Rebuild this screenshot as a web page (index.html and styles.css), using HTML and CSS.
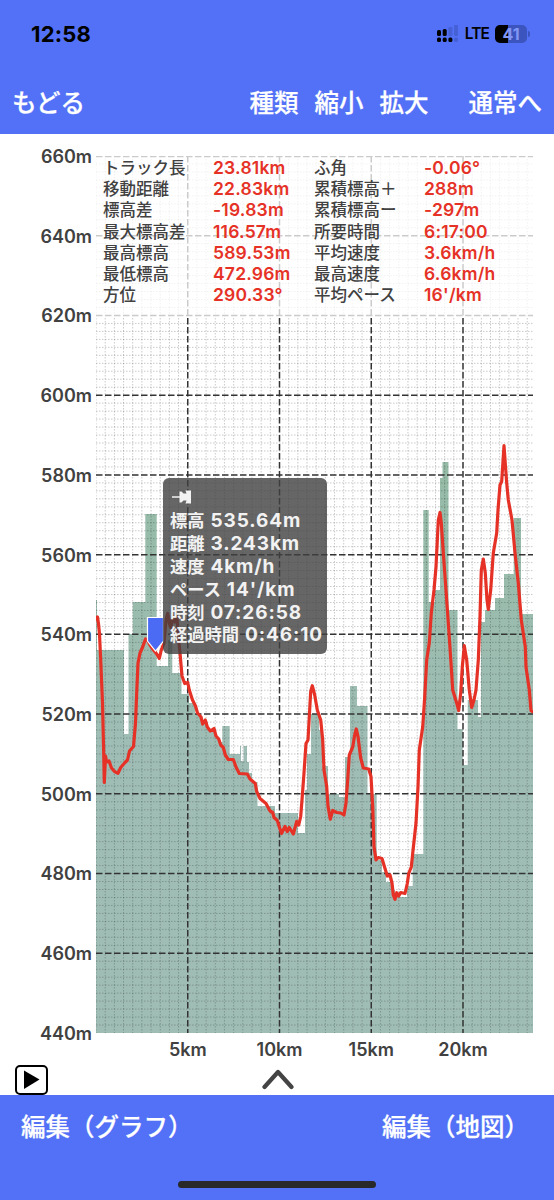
FILE: index.html
```
<!DOCTYPE html>
<html lang="ja">
<head>
    <meta charset="UTF-8">
    <meta name="viewport" content="width=device-width, initial-scale=1.0">
    <title>標高グラフ</title>
    <link rel="stylesheet" href="styles.css">
</head>
<body>
    <div class="app">
        <header class="header">
            <div class="status">
                <span class="clock">12:58</span>
                <div class="status-right">
                    <svg class="signal" width="22" height="18" viewBox="0 0 22 18">
                        <g fill="#000">
                            <rect x="0" y="5" width="4" height="6" rx="1.5"/>
                            <rect x="5.7" y="4" width="4" height="7" rx="1.5"/>
                            <rect x="0" y="12.5" width="4" height="4.5" rx="1.5"/>
                            <rect x="5.7" y="12.5" width="4" height="4.5" rx="1.5"/>
                            <rect x="11.4" y="12.5" width="4" height="4.5" rx="1.5"/>
                        </g>
                        <g fill="#4660d6">
                            <rect x="11.4" y="2" width="4" height="9" rx="1.2"/>
                            <rect x="17" y="0" width="4" height="11" rx="1.2"/>
                            <rect x="17" y="12.5" width="4" height="4.5" rx="1.5"/>
                        </g>
                    </svg>
                    <span class="lte">LTE</span>
                    <span class="battery">41</span>
                    <span class="battery-tip"></span>
                </div>
            </div>
            <nav class="nav">
                <a class="back">もどる</a>
                <a>種類</a>
                <a>縮小</a>
                <a>拡大</a>
                <a class="mode">通常へ</a>
            </nav>
        </header>

        <main class="chart">
            <div class="y-axis">
                <span>660m</span><span>640m</span><span>620m</span><span>600m</span>
                <span>580m</span><span>560m</span><span>540m</span><span>520m</span>
                <span>500m</span><span>480m</span><span>460m</span><span>440m</span>
            </div>
            <div class="plot">
                <svg class="graph" width="437" height="877" viewBox="96 156 437 877">
                    <defs>
                        <linearGradient id="areaFill" gradientUnits="userSpaceOnUse" x1="0" y1="460" x2="0" y2="760">
                            <stop offset="0" stop-color="#95bba6"/>
                            <stop offset="1" stop-color="#9fbdb5"/>
                        </linearGradient>
                    </defs>
                    <path fill="url(#areaFill)" d="M96 1033V600H97V650H124V734H128.500V634H132.700V602H145.300V514H156.700V666H168V640H172.300V673H181.500V694H189V703H195V714H201V722H208V730H216V738H219V742H222.300V726H229.700V754H240V746H241V761H243.500V746H247V762H249V773H252V782H257.500V806H275V813H298V833H305V790H307V754H311V714H319V730H322V766H328V794H339V797H345V757H350V686H357V706H367.500V794H376.700V860H382V872H386V882H391V890H395V897H407V886H412.700V854H423.300V510H428.700V602H435V590H440V478H442.500V462H448.500V610H457.500V729H462.700V765H467.700V700H478V717H481V622H485V610H495V598H504V574H513.700V518H521V614H533V1033Z"/>
                    <g id="grid"></g>
                    <polyline class="track" points="96,619 97.5,617 98.5,624 99.5,634 100.7,660 102.5,703 103.7,753 104.3,782.5 105.5,756 106.7,762 109,761 111.5,768 114.5,771.5 118,773.3 120.7,767.5 125,762.5 127.5,760 129.5,751 133.5,746.5 135.5,723 136.7,693 138,663 140,653 142.7,647 145.5,639 147.5,640 150,645 153.5,650 156.7,654 159.3,658.3 161.3,650 164,643 166,620 167.7,613.5 169.5,624 171,628 172.5,616 174.7,622 177,617 178,633 180,653 182,676 184.7,683.5 187.7,682.5 189.3,690 192.5,700 195.5,706 197.5,713 201,717 202.7,724 205.3,720 207.3,727 210.3,731 214,728.5 216,736 218.7,739 220.7,745 223.3,747.5 225.3,755 228.3,759.5 233.3,759.5 236,767 239.3,773.5 247.3,774 250,779 255.3,783.5 256.7,791.5 260,798.5 266,803.5 270,811 272.7,812.5 274,817.5 277.3,820.5 279.5,827.5 281.5,833.5 285,826.5 287.3,831.5 289.3,827.5 293.3,834 296.7,821.5 298.7,825 300.7,816.5 302,800 304,773 306,743.5 308,740 309.5,713 310.7,691.5 312.3,685.7 314.7,695 317.3,710 320.7,720 322.7,740 324,770 326.7,786.5 328,806.5 330.3,819.3 332.7,810.5 336.7,812.5 340.7,813 344,815 346,803 347.7,780 349.3,755 352.7,747 354.7,735 356.3,729 358,736.5 360.7,758 363.3,768 368.7,769 371,776.5 372.7,806.5 374,846.5 376,860 378.3,857.5 382,858.5 384.7,867.5 387.3,876 390,875 392,883 393.3,895 395,899.3 396.7,892.7 398.7,896 400.7,892.5 405,893.5 407.3,883.5 408.7,873.5 411.3,867 412.7,853.5 416,823 418,787 419.3,750 422.7,727 424.7,697 426.7,660 429.3,643 431.3,613 434,590 436,567 438.3,520 440,512.5 441.3,523 443.3,553 446,590 449,633 451,663 452.7,690 456.7,703 458.7,710.5 460.7,693 462.3,667 464.3,645.7 466.7,660 469.3,690 471.7,707.5 474,700 476,690 478.3,660 480,616.5 481.3,570 483.3,559 485.3,573 487,600 488.3,609.5 490.7,590 493.3,553 496.7,533 498,510 500,485 501.7,481.5 504,445.7 506.7,483 508.3,500 512,520 515,553 518.3,583 521.3,620 525.3,647 526,667 529.3,690 531,710.7 532.7,711.7"/>
                    <path class="marker" d="M147.500 617.500H163.500V641L155.500 651L147.500 641Z"/>
                </svg>

                <div class="stats">
                    <span>トラック長</span><b>23.81km</b><span>ふ角</span><b>-0.06°</b>
                    <span>移動距離</span><b>22.83km</b><span>累積標高＋</span><b>288m</b>
                    <span>標高差</span><b>-19.83m</b><span>累積標高ー</span><b>-297m</b>
                    <span>最大標高差</span><b>116.57m</b><span>所要時間</span><b>6:17:00</b>
                    <span>最高標高</span><b>589.53m</b><span>平均速度</span><b>3.6km/h</b>
                    <span>最低標高</span><b>472.96m</b><span>最高速度</span><b>6.6km/h</b>
                    <span>方位</span><b>290.33°</b><span>平均ペース</span><b>16'/km</b>
                </div>

                <div class="tooltip">
                    <svg class="pin" width="20" height="14" viewBox="0 0 20 14">
                        <path fill="#f2f2f2" d="M0 6.200H7.500V1.500H9.500L11.500 3.500H14.500L13.500 0.500H19V13.500H13.500L14.500 10.500H11.500L9.500 12.500H7.500V7.800H0Z"/>
                    </svg>
                    <span>標高 <b>535.64m</b></span>
                    <span>距離 <b>3.243km</b></span>
                    <span>速度 <b>4km/h</b></span>
                    <span>ペース <b>14'/km</b></span>
                    <span>時刻 <b>07:26:58</b></span>
                    <span>経過時間 <b>0:46:10</b></span>
                </div>
            </div>
            <div class="x-axis">
                <span>5km</span><span>10km</span><span>15km</span><span>20km</span>
            </div>
        </main>

        <div class="controls">
            <svg class="play" width="33" height="30" viewBox="0 0 33 30">
                <rect x="1" y="1" width="31" height="28" rx="4" fill="#fff" stroke="#000" stroke-width="2"/>
                <path d="M9 5.500L24.500 14.500L9 24Z"/>
            </svg>
            <svg class="chevron" width="32" height="21" viewBox="0 0 32 21">
                <path d="M2.500 18L16 3L29.500 18" fill="none" stroke="#444" stroke-width="4.200" stroke-linecap="round" stroke-linejoin="round"/>
            </svg>
        </div>

        <footer class="footer">
            <div class="footer-links">
                <a>編集（グラフ）</a>
                <a>編集（地図）</a>
            </div>
            <div class="home-bar"></div>
        </footer>
    </div>

    <script>
        // Desenha a grade: linhas finas a cada 2m / 0.5km e tracejadas a cada 20m / 5km
        const left = 96, right = 533, top0 = 156, bottom = 1033;
        const stepY = (bottom - top0) / 110;
        const stepX = 9.175;
        let lines = '';

        function line(x1, y1, x2, y2, cls) {
            lines += `<line x1="${x1}" y1="${y1}" x2="${x2}" y2="${y2}" class="${cls}"/>`;
        }

        for (let i = 0; i <= 109; i++) {
            if (i % 10 !== 0) line(left, top0 + i * stepY, right, top0 + i * stepY, 'minor');
        }
        for (let i = 0; left + i * stepX < right; i++) {
            if (i % 10 !== 0 || i === 0) line(left + i * stepX, top0, left + i * stepX, bottom, 'minor');
        }
        for (let i = 0; i <= 100; i += 10) {
            const y = Math.max(top0 + i * stepY, top0 + 0.5);
            line(left, y, right, y, 'major');
        }
        for (let i = 10; i <= 40; i += 10) {
            line(left + i * stepX, top0, left + i * stepX, bottom, 'major');
        }
        document.getElementById('grid').innerHTML = lines;
    </script>
</body>
</html>
```

FILE: styles.css
```
body {
    margin: 0;
    background: #fff;
    font-family: Inter, "Noto Sans CJK JP", sans-serif;
}
.app {
    width: 554px;
    height: 1200px;
    display: flex;
    flex-direction: column;
    overflow: hidden;
}
.header {
    height: 134px;
    background: #5271f6;
}
.status {
    height: 67px;
    padding: 0 24px 0 31px;
    display: flex;
    align-items: center;
    justify-content: space-between;
    box-sizing: border-box;
}
.clock {
    font-size: 22px;
    font-weight: 700;
    letter-spacing: 0.2px;
}
.status-right {
    display: flex;
    align-items: center;
}
.signal {
    margin-right: -2px;
}
.lte {
    margin: 0 6px 0 8px;
    font-size: 15.5px;
    font-weight: 600;
    letter-spacing: -0.9px;
}
.battery {
    width: 32px;
    height: 18px;
    border-radius: 5px;
    background: linear-gradient(90deg, #000 42%, #3c54bd 42%);
    color: #8297f5;
    font-size: 16px;
    font-weight: 700;
    line-height: 19px;
    text-align: center;
}
.battery-tip {
    width: 2px;
    height: 6px;
    margin-left: 1px;
    border-radius: 0 2px 2px 0;
    background: #3c54bd;
}
.nav {
    display: flex;
    padding: 18px 12px 0;
    gap: 16px;
    color: #fff;
    font-size: 24.5px;
    font-weight: 500;
    line-height: 36px;
    -webkit-text-stroke: 0.25px #fff;
}
.back {
    margin-right: auto;
}
.mode {
    margin-left: 24px;
}
.chart {
    height: 926px;
    padding-top: 22px;
    display: grid;
    grid-template-columns: 92px 437px;
    grid-template-rows: 877px 27px;
    column-gap: 4px;
    box-sizing: border-box;
    color: #414141;
    font-size: 18px;
    font-weight: 600;
}
.y-axis {
    display: flex;
    flex-direction: column;
    justify-content: space-between;
    margin: -9px 0 -11px;
    text-align: right;
    line-height: 20px;
}
.plot {
    position: relative;
}
.graph {
    display: block;
}
.minor {
    stroke: #000;
    stroke-opacity: 0.27;
    stroke-width: 0.8;
    stroke-dasharray: 1.5 1.5;
}
.major {
    stroke: #333;
    stroke-width: 1.5;
    stroke-dasharray: 6.5 2.5;
}
.track {
    fill: none;
    stroke: #e63226;
    stroke-width: 3.2;
    stroke-linejoin: round;
    stroke-linecap: round;
}
.marker {
    fill: #4b6bf5;
    stroke: #fff;
    stroke-width: 1.2;
}
.stats {
    position: absolute;
    top: 0;
    left: 0;
    width: 437px;
    height: 161px;
    padding: 1px 0 0 7px;
    display: grid;
    grid-template-columns: 110px 101px 110px 1fr;
    grid-auto-rows: 21.2px;
    box-sizing: border-box;
    background: rgba(255, 255, 255, 0.75);
    font-size: 16.5px;
    font-weight: 500;
    line-height: 22px;
    white-space: nowrap;
}
.stats b {
    color: #e63226;
    font-size: 17.5px;
    font-weight: 600;
    letter-spacing: 0.2px;
}
.tooltip {
    position: absolute;
    top: 322px;
    left: 67px;
    width: 164px;
    height: 176px;
    padding: 12px 0 0 7px;
    display: flex;
    flex-direction: column;
    box-sizing: border-box;
    border-radius: 6px;
    background: rgba(64, 64, 64, 0.8);
    color: #f2f2f2;
    font-size: 17.3px;
    line-height: 22.9px;
    white-space: nowrap;
}
.tooltip span {
    height: 22.9px;
}
.tooltip b {
    margin-left: 1.5px;
    font-size: 19px;
    font-weight: 700;
    letter-spacing: 0.9px;
}
.pin {
    margin: 0 0 6px 2px;
}
.x-axis {
    grid-column: 2;
    display: grid;
    grid-template-columns: repeat(4, 91.75px);
    padding: 6px 0 0 45.9px;
    line-height: 21px;
    text-align: center;
}
.controls {
    height: 35px;
    display: flex;
    padding: 5px 0 0 15px;
    box-sizing: border-box;
}
.chevron {
    margin: 4px 0 0 214px;
}
.footer {
    height: 105px;
    background: #5271f6;
}
.footer-links {
    display: flex;
    justify-content: space-between;
    height: 86px;
    padding: 14px 25px 0 21px;
    box-sizing: border-box;
    color: #fff;
    font-size: 24.5px;
    font-weight: 500;
    line-height: 36px;
    -webkit-text-stroke: 0.25px #fff;
}
.home-bar {
    width: 198px;
    height: 7px;
    margin: 0 auto;
    border-radius: 4px;
    background: #292929;
}
```
